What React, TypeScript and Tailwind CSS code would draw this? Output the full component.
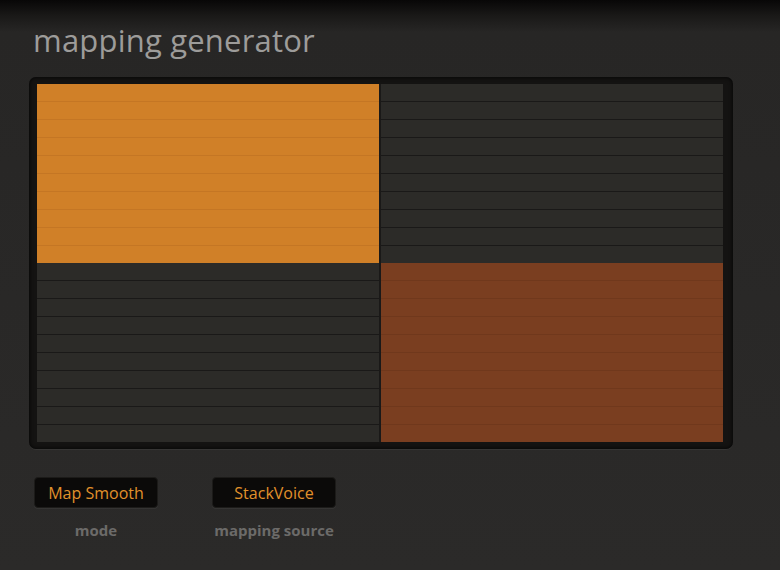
import React from "react";

// 2x2 mapping grid: which cells are lit and with what colour
const cells = [
  { id: 0, fill: "bg-[#d08028]", line: "border-[#c47624]" },
  { id: 1, fill: "bg-[#2c2b28]", line: "border-[#1a1918]" },
  { id: 2, fill: "bg-[#2c2b28]", line: "border-[#1a1918]" },
  { id: 3, fill: "bg-[#7a3e20]", line: "border-[#70381c]" },
];

const controls = [
  { value: "Map Smooth", label: "mode" },
  { value: "StackVoice", label: "mapping source" },
];

function Cell({ fill, line }: { fill: string; line: string }) {
  return (
    <div className={`flex flex-col ${fill}`}>
      {Array.from({ length: 10 }).map((_, i) => (
        <div key={i} className={`flex-1 ${i < 9 ? `border-b ${line}` : ""}`} />
      ))}
    </div>
  );
}

export default function App() {
  return (
    <div
      className="w-[780px] h-[570px] overflow-hidden bg-[linear-gradient(to_bottom,#080707_0px,#1a1918_16px,#272625_32px,#2b2a29_100%)]"
      style={{ fontFamily: "'Open Sans', Lato, sans-serif" }}
    >
      <h1 className="pl-[33px] pt-[20px] h-[77px] text-[31px] leading-[40px] tracking-[0.2px] text-[#9d9c9a]">
        mapping generator
      </h1>

      <div className="ml-[29px] w-[704px] h-[372px] rounded-[7px] bg-[#141312] p-[7px] pl-[8px] pr-[10px] shadow-[inset_0_0_4px_rgba(0,0,0,0.9),0_1px_0_rgba(255,255,255,0.06)]">
        <div className="grid grid-cols-2 grid-rows-2 gap-x-[2px] w-full h-full bg-[#1a1918]">
          {cells.map((c) => (
            <Cell key={c.id} fill={c.fill} line={c.line} />
          ))}
        </div>
      </div>

      <div className="flex gap-[54px] pl-[34px] pt-[28px]">
        {controls.map((c) => (
          <div key={c.label} className="flex flex-col items-center w-[124px]">
            <div className="w-[124px] h-[31px] rounded-[4px] bg-[#0b0a09] border border-[#1c1b19] flex items-center justify-center text-[16px] text-[#e1912b] shadow-[0_1px_0_rgba(255,255,255,0.05)]">
              {c.value}
            </div>
            <div className="mt-[11px] text-[15px] font-bold text-[#6c6b69] whitespace-nowrap">
              {c.label}
            </div>
          </div>
        ))}
      </div>
    </div>
  );
}
